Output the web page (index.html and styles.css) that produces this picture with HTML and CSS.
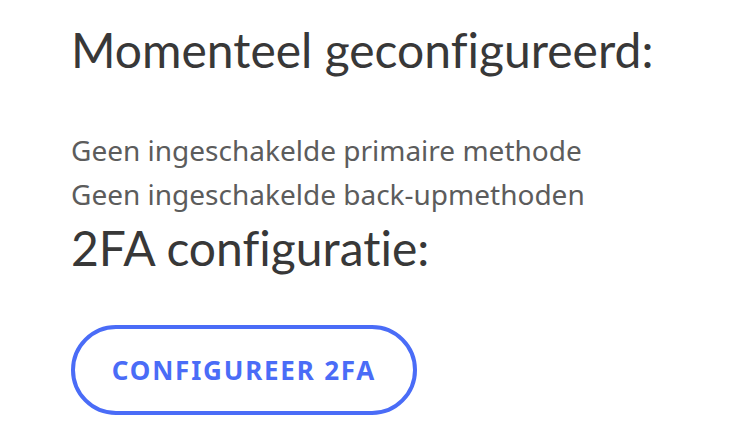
FILE: index.html
```html
<!doctype html>
<html>
<head>
<meta charset="utf-8">
<title>2FA</title>
<link rel="stylesheet" href="styles.css">
</head>
<body>
<div class="panel">
  <h2 class="title">Momenteel geconfigureerd:</h2>
  <p class="line">Geen ingeschakelde primaire methode</p>
  <p class="line">Geen ingeschakelde back-upmethoden</p>
  <h2 class="title title-2">2FA configuratie:</h2>
  <button class="btn" type="button">Configureer 2FA</button>
</div>
</body>
</html>
```

FILE: styles.css
```css
body{
  margin:0;
  background:#fff;
}
.panel{
  padding:20px 0 0 71px;
}
.title{
  margin:0;
  font-family:"Lato","Noto Sans",sans-serif;
  font-weight:normal;
  font-size:48px;
  line-height:60px;
  font-variant-ligatures:none;
  color:#383838;
}
.line{
  margin:0;
  font-family:"Noto Sans",sans-serif;
  font-size:28px;
  line-height:44px;
  color:#5c5c5c;
}
.title + .line{
  margin-top:48px;
}
.title-2{
  margin-top:2px;
}
.btn{
  margin-top:47px;
  width:346px;
  height:90px;
  border:4px solid #4a6cf7;
  border-radius:45px;
  background:#fff;
  color:#4a6cf7;
  font-family:"Noto Sans",sans-serif;
  font-weight:bold;
  font-size:26px;
  letter-spacing:1.8px;
  text-transform:uppercase;
  cursor:pointer;
}
```
